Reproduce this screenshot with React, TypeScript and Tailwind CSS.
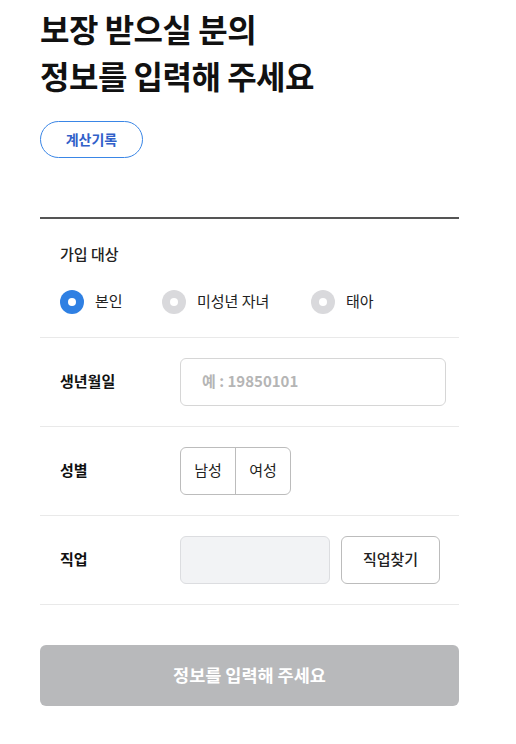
const font = { fontFamily: '"Noto Sans CJK KR", "Noto Sans", sans-serif' };

function Radio({ label, checked }: { label: string; checked?: boolean }) {
  return (
    <label className="flex items-center gap-[11px]">
      <span
        className={`flex h-6 w-6 items-center justify-center rounded-full ${
          checked ? "bg-[#2f80e3]" : "bg-[#d9d9dc]"
        }`}
      >
        <span className="h-2 w-2 rounded-full bg-white" />
      </span>
      <span className="text-[15px] text-[#222]">{label}</span>
    </label>
  );
}

function Row({ label, children }: { label: string; children: React.ReactNode }) {
  return (
    <div className="flex items-center border-b border-[#e9e9e9] py-5">
      <div className="w-[140px] shrink-0 pl-5 text-[15px] font-bold text-[#111]">{label}</div>
      {children}
    </div>
  );
}

export default function App() {
  return (
    <div className="min-h-[744px] bg-white" style={font}>
      <div className="ml-10 w-[419px]">
        <h1 className="pt-[5px] text-[32px] font-bold leading-[47px] tracking-[-0.5px] text-[#111]">
          보장 받으실 분의
          <br />
          정보를 입력해 주세요
        </h1>
        <button className="mt-[22px] h-[37px] w-[103px] rounded-full border border-[#3a86e6] text-[14px] font-bold text-[#3160c9]">
          계산기록
        </button>

        <div className="mt-[59px] border-t-2 border-[#555]">
          <div className="border-b border-[#e9e9e9] pb-[23px] pl-5 pt-[24px]">
            <div className="text-[15px] font-medium text-[#222]">가입 대상</div>
            <div className="mt-[24px] flex items-center">
              <div className="w-[102px]">
                <Radio label="본인" checked />
              </div>
              <div className="w-[149px]">
                <Radio label="미성년 자녀" />
              </div>
              <Radio label="태아" />
            </div>
          </div>

          <Row label="생년월일">
            <div className="flex h-[48px] w-[266px] items-center rounded-md border border-[#d6d6d6] px-[21px] text-[15px] font-bold text-[#b5b5b5]">
              예 : 19850101
            </div>
          </Row>

          <Row label="성별">
            <div className="flex h-[48px] overflow-hidden rounded-md border border-[#bcbcbc] text-[15px] text-[#222]">
              <button className="w-[55px] border-r border-[#bcbcbc]">남성</button>
              <button className="w-[54px]">여성</button>
            </div>
          </Row>

          <Row label="직업">
            <div className="flex gap-[11px]">
              <div className="h-[48px] w-[150px] rounded-md border border-[#dcdde0] bg-[#f2f3f5]" />
              <button className="h-[48px] w-[99px] rounded-md border border-[#bcbcbc] text-[15px] font-medium text-[#222]">
                직업찾기
              </button>
            </div>
          </Row>
        </div>

        <button className="mt-[40px] h-[61px] w-full rounded-md bg-[#b8b9bb] text-[17.5px] font-bold text-white">
          정보를 입력해 주세요
        </button>
      </div>
    </div>
  );
}
